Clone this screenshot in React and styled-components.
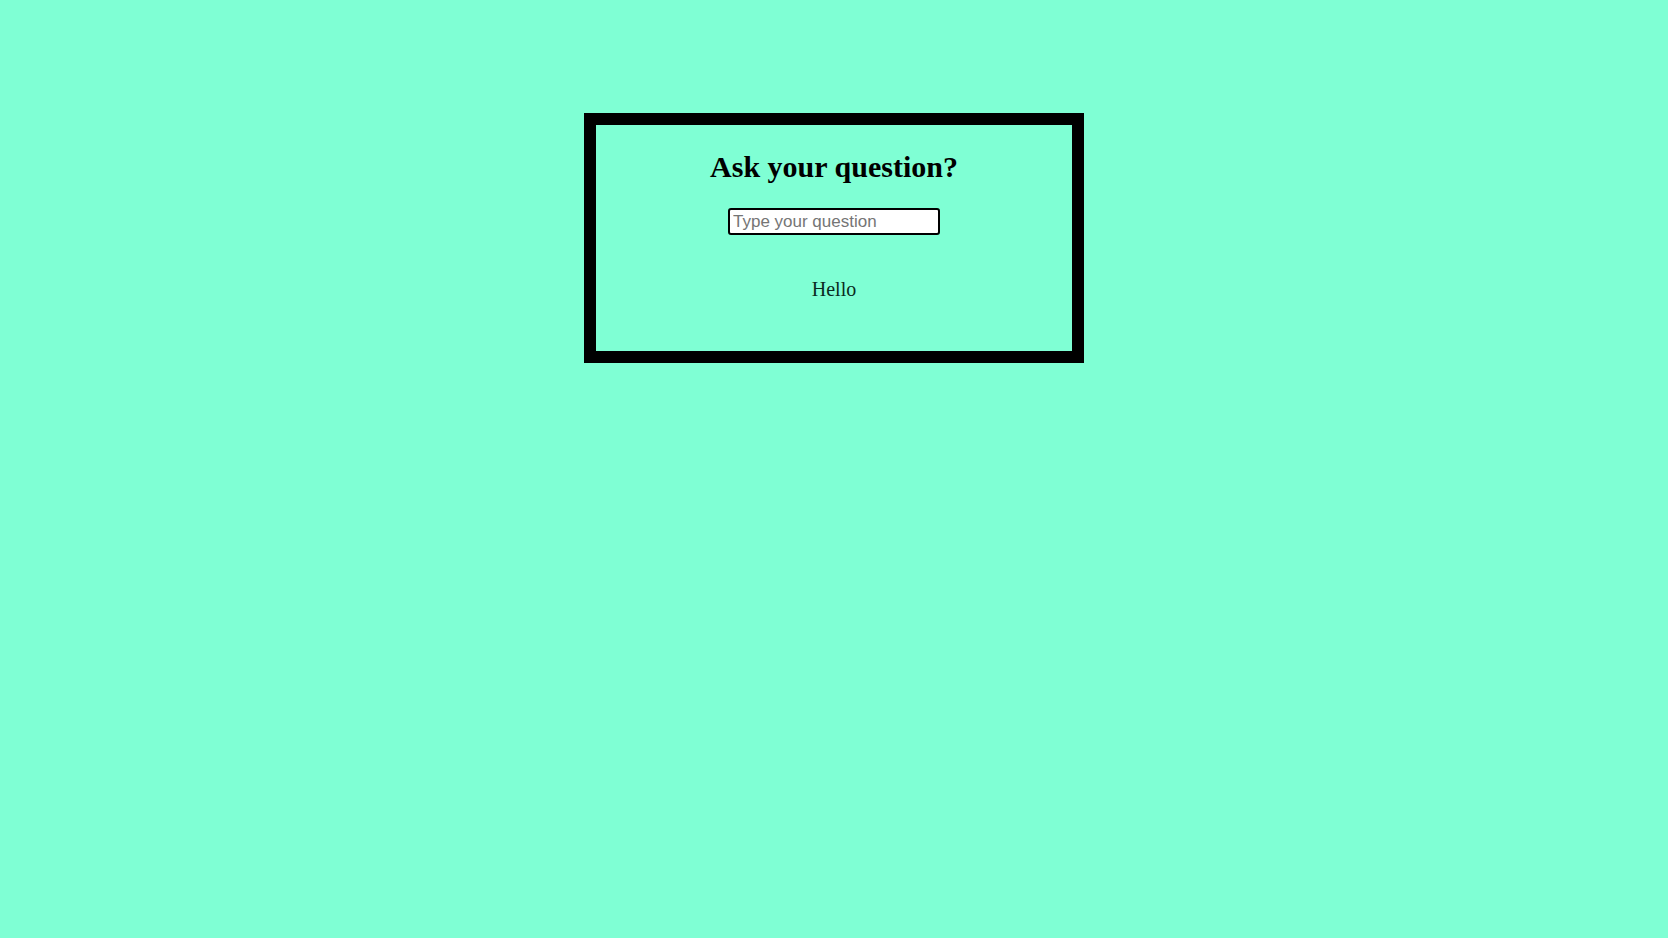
import React from "react";
import styled, { createGlobalStyle } from "styled-components";

const GlobalStyle = createGlobalStyle`
  html, body {
    margin: 0;
    padding: 0;
    background: aquamarine;
  }
`;

const Page = styled.div`
  width: 1668px;
  height: 938px;
  background: aquamarine;
  padding-top: 113px;
  box-sizing: border-box;
  font-family: "Liberation Serif", "Times New Roman", serif;
`;

const Box = styled.div`
  width: 500px;
  height: 250px;
  margin: 0 auto;
  border: 12px solid #000;
  box-sizing: border-box;
  display: flex;
  flex-direction: column;
  align-items: center;
`;

const Title = styled.h2`
  margin: 25px 0 0;
  font-size: 30px;
  font-weight: bold;
  color: #000;
`;

const QuestionInput = styled.input`
  margin-top: 24px;
  width: 212px;
  height: 27px;
  box-sizing: border-box;
  border: 2px solid #000;
  border-radius: 3px;
  padding: 0 3px;
  font-family: "Liberation Sans", Arial, sans-serif;
  font-size: 17px;
  background: #fff;

  &::placeholder {
    color: #757575;
  }
`;

const Answer = styled.p`
  margin: 43px 0 0;
  font-size: 20px;
  color: #0a2a20;
`;

const App = () => {
  return (
    <Page>
      <GlobalStyle />
      <Box>
        <Title>Ask your question?</Title>
        <QuestionInput placeholder="Type your question" />
        <Answer>Hello</Answer>
      </Box>
    </Page>
  );
};

export default App;
